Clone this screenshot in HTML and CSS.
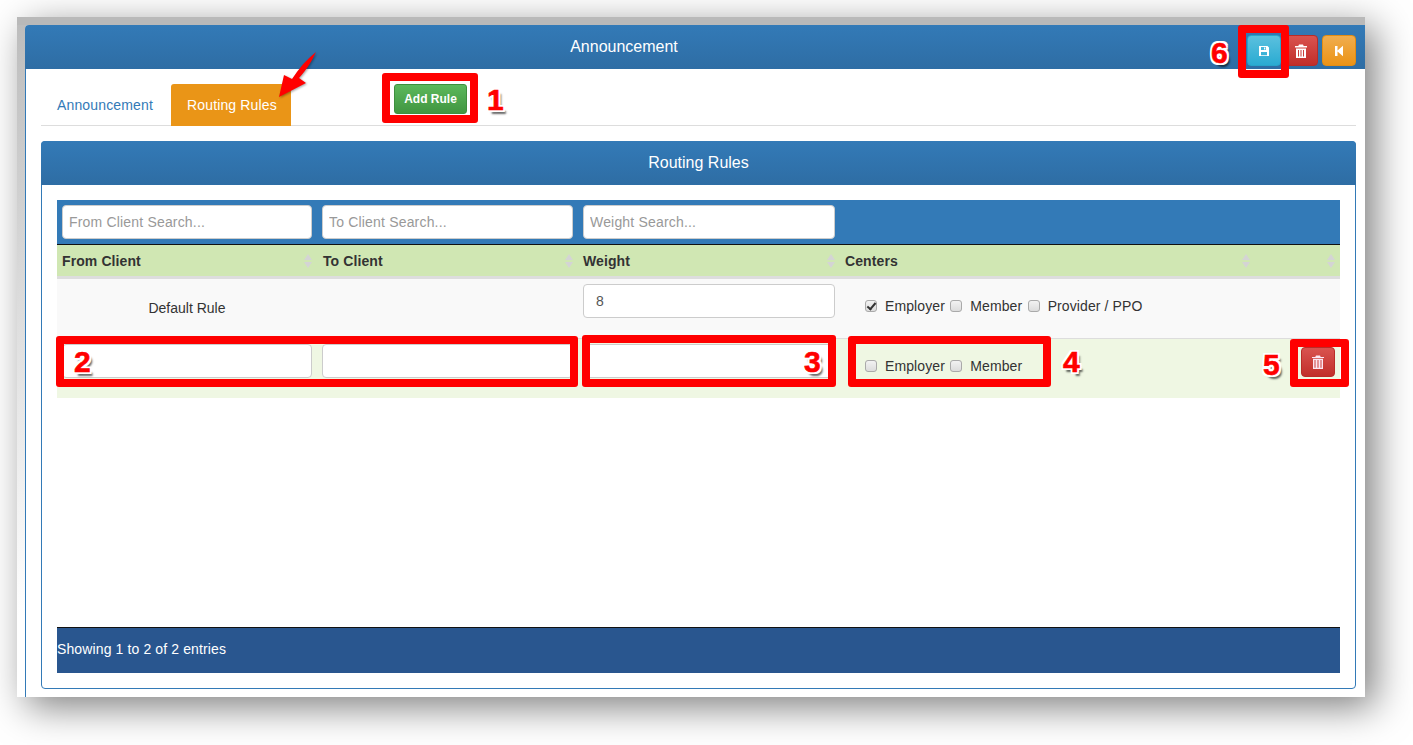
FILE: index.html
```html
<!DOCTYPE html>
<html lang="en">
<head>
    <meta charset="UTF-8">
    <title>Announcement</title>
    <link rel="stylesheet" href="styles.css">
</head>
<body>
    <div class="shot">
        <div class="panel">
            <div class="panel-head">
                <div class="panel-title">Announcement</div>
                <div class="toolbar">
                    <button class="btn btn-save">
                        <svg width="12" height="12" viewBox="0 0 12 12"><path fill="#fff" fill-rule="evenodd" d="M1 1h8.500L11 2.500V11H1zM3 2v3h5V2zM6 2.500h1.300v2H6zM3 7v3.200h6V7z"/></svg>
                    </button>
                    <button class="btn btn-del">
                        <svg width="12" height="14" viewBox="0 0 12 14"><path fill="#fff" fill-rule="evenodd" d="M4 0.500h4L8.700 2H12v1.500H0V2h3.300zM1 4.500h10V14H1zM3 6v6.500h1V6zM5.500 6v6.500h1V6zM8 6v6.500h1V6z"/></svg>
                    </button>
                    <button class="btn btn-back">
                        <svg width="10" height="12" viewBox="0 0 10 12"><path fill="#fff" d="M1 1h2.500v4.500L9 .8v10.400L3.500 6.500V11H1z"/></svg>
                    </button>
                </div>
            </div>
            <div class="panel-body">
                <div class="tabs">
                    <a class="tab">Announcement</a>
                    <a class="tab tab-active">Routing Rules</a>
                    <button class="btn-add">Add Rule</button>
                </div>
                <div class="inner-panel">
                    <div class="inner-head">Routing Rules</div>
                    <div class="inner-body">
                        <table class="rules">
                            <colgroup>
                                <col class="col-from">
                                <col class="col-to">
                                <col class="col-weight">
                                <col class="col-centers">
                                <col class="col-action">
                            </colgroup>
                            <thead>
                                <tr class="search-row">
                                    <td><input class="field" type="text" placeholder="From Client Search..."></td>
                                    <td><input class="field" type="text" placeholder="To Client Search..."></td>
                                    <td><input class="field" type="text" placeholder="Weight Search..."></td>
                                    <td></td>
                                    <td></td>
                                </tr>
                                <tr class="head-row">
                                    <th><div class="th-in">From Client <svg class="sort" width="8" height="14" viewBox="0 0 8 14"><path d="M4 0l4 6H0zM4 14L0 8h8z"/></svg></div></th>
                                    <th class="th-to"><div class="th-in">To Client <svg class="sort" width="8" height="14" viewBox="0 0 8 14"><path d="M4 0l4 6H0zM4 14L0 8h8z"/></svg></div></th>
                                    <th><div class="th-in">Weight <svg class="sort" width="8" height="14" viewBox="0 0 8 14"><path d="M4 0l4 6H0zM4 14L0 8h8z"/></svg></div></th>
                                    <th><div class="th-in">Centers <svg class="sort" width="8" height="14" viewBox="0 0 8 14"><path d="M4 0l4 6H0zM4 14L0 8h8z"/></svg></div></th>
                                    <th><div class="th-in th-end"><svg class="sort" width="8" height="14" viewBox="0 0 8 14"><path d="M4 0l4 6H0zM4 14L0 8h8z"/></svg></div></th>
                                </tr>
                            </thead>
                            <tbody>
                                <tr class="row-odd">
                                    <td class="default-rule">Default Rule</td>
                                    <td></td>
                                    <td class="cell-top"><input class="field field-weight" type="text" value="8"></td>
                                    <td class="centers">
                                        <label class="check"><input type="checkbox" checked> Employer</label>
                                        <label class="check"><input type="checkbox"> Member</label>
                                        <label class="check"><input type="checkbox"> Provider / PPO</label>
                                    </td>
                                    <td></td>
                                </tr>
                                <tr class="row-even">
                                    <td class="cell-top"><input class="field" type="text"></td>
                                    <td class="cell-top"><input class="field" type="text"></td>
                                    <td class="cell-top"><input class="field" type="text"></td>
                                    <td class="centers">
                                        <label class="check"><input type="checkbox"> Employer</label>
                                        <label class="check"><input type="checkbox"> Member</label>
                                    </td>
                                    <td class="cell-action">
                                        <button class="btn btn-del btn-row">
                                            <svg width="12" height="14" viewBox="0 0 12 14"><path fill="#fbe6f2" fill-rule="evenodd" d="M4 0.500h4L8.700 2H12v1H0V2h3.300zM1 3.800h10V14H1zM2.500 5v7.800h1V5zM5.500 5v7.800h1V5zM8.500 5v7.800h1V5z"/></svg>
                                        </button>
                                    </td>
                                </tr>
                            </tbody>
                        </table>
                        <div class="table-foot">Showing 1 to 2 of 2 entries</div>
                    </div>
                </div>
            </div>
        </div>
    </div>

    <!-- callouts drawn over the page -->
    <div class="box box-1"></div>
    <div class="box box-2"></div>
    <div class="box box-3"></div>
    <div class="box box-4"></div>
    <div class="box box-5"></div>
    <div class="box box-6"></div>
    <span class="num num-1">1</span>
    <span class="num num-2">2</span>
    <span class="num num-3">3</span>
    <span class="num num-4">4</span>
    <span class="num num-5">5</span>
    <span class="num num-6">6</span>
    <svg class="arrow" width="44" height="50" viewBox="0 0 44 50">
        <path fill="#f00" d="M41 1C37 10 32 18 24 27L31 32L4 46L9 24L17 28C24 17 32 8 41 1z"/>
    </svg>
</body>
</html>
```

FILE: styles.css
```css
html, body {
    margin: 0;
    padding: 0;
    height: 745px;
    overflow: hidden;
    background: #fff;
}

body {
    position: relative;
    font-family: "Liberation Sans", Arial, sans-serif;
    font-size: 14px;
    color: #333;
}

.shot {
    box-sizing: border-box;
    width: 1348px;
    height: 680px;
    margin: 17px 0 0 17px;
    padding-left: 8px;
    border-top: 8px solid #b9b9b9;
    background: linear-gradient(to bottom, #bdbdbd, #fff 88%);
    box-shadow: 10px 10px 36px rgba(0, 0, 0, .5);
}

.panel {
    display: flex;
    flex-direction: column;
    height: 672px;
    background: #fff;
    border-radius: 4px 0 0 0;
}

.panel-head {
    display: flex;
    height: 44px;
    color: #fff;
    background: linear-gradient(to bottom, #337ab7, #2e6da4);
    border-radius: 4px 0 0 0;
}

.panel-title {
    flex: 1;
    text-align: center;
    font-size: 16px;
    line-height: 43px;
}

.toolbar {
    display: flex;
    gap: 4px;
    box-sizing: border-box;
    width: 142px;
    padding: 10px 9px 0 24px;
}

.btn {
    display: flex;
    align-items: center;
    justify-content: center;
    width: 33.500px;
    height: 31px;
    padding: 0;
    border: 1px solid transparent;
    border-radius: 4px;
}

.btn-save {
    background: linear-gradient(to bottom, #5bc0de, #2aabd2);
    border-color: #28a4c9;
}

.btn-del {
    background: linear-gradient(to bottom, #d9534f, #c12e2a);
    border-color: #b92c28;
}

.btn-back {
    background: linear-gradient(to bottom, #f0ad4e, #eb9316);
    border-color: #e38d13;
}

.btn-row {
    display: inline-flex;
    width: 34px;
    height: 30px;
}

.panel-body {
    flex: 1;
    display: flex;
    flex-direction: column;
    padding: 15px 9px 8px 15px;
    border-left: 1px solid #337ab7;
}

.tabs {
    display: flex;
    align-items: flex-start;
    height: 41px;
    border-bottom: 1px solid #ddd;
}

.tab {
    box-sizing: border-box;
    width: 128px;
    height: 42px;
    padding-left: 16px;
    line-height: 42px;
    letter-spacing: .15px;
    color: #337ab7;
}

.tab-active {
    width: 120px;
    margin-left: 2px;
    color: #fff;
    background: #ea9517;
    border-radius: 3px 3px 0 0;
}

.btn-add {
    width: 73px;
    height: 30px;
    margin-left: 103px;
    padding: 0;
    font-family: inherit;
    font-size: 12px;
    font-weight: bold;
    color: #fff;
    background: linear-gradient(to bottom, #5cb85c, #419641);
    border: 1px solid #3e8f3e;
    border-radius: 3px;
}

.inner-panel {
    flex: 1;
    display: flex;
    flex-direction: column;
    margin-top: 15px;
    border: 1px solid #337ab7;
    border-radius: 4px;
}

.inner-head {
    height: 43px;
    margin: -1px -1px 0;
    padding-top: 1px;
    text-align: center;
    font-size: 16px;
    line-height: 42px;
    color: #fff;
    background: linear-gradient(to bottom, #337ab7, #2e6da4);
    border-radius: 4px 4px 0 0;
}

.inner-body {
    flex: 1;
    display: flex;
    flex-direction: column;
    padding: 15px;
}

.rules {
    width: 1283px;
    table-layout: fixed;
    border-collapse: collapse;
}

.col-from { width: 260px; }
.col-to { width: 261px; }
.col-weight { width: 262px; }
.col-centers { width: 415px; }
.col-action { width: 85px; }

.rules td, .rules th {
    padding: 0 5px;
}

.field {
    display: block;
    box-sizing: border-box;
    width: 100%;
    height: 34px;
    padding: 0 6px;
    font-family: inherit;
    font-size: 14px;
    color: #555;
    background: #fff;
    border: 1px solid #ccc;
    border-radius: 4px;
}

.field::placeholder {
    color: #999;
    letter-spacing: .18px;
}

.field-weight {
    padding-left: 12px;
}

.search-row {
    height: 44px;
    background: #337ab7;
    border-bottom: 1px solid #111;
}

.head-row {
    height: 33px;
    background: #d0e7b3;
    border-bottom: 3px solid #ddd;
}

.rules th {
    padding-top: 2px;
}

.th-in {
    display: flex;
    align-items: center;
    justify-content: space-between;
    padding-right: 0;
    font-size: 14px;
    font-weight: bold;
    letter-spacing: .1px;
}

.rules .th-to {
    padding-left: 6px;
}

.th-end {
    justify-content: flex-end;
}

.sort {
    fill: #d4d4d4;
}

.row-odd {
    height: 61px;
    background: #f9f9f9;
}

.row-even {
    height: 60px;
    background: #eff7e3;
    border-top: 1px solid #ddd;
}

.default-rule {
    text-align: center;
}

.rules .cell-top {
    padding-top: 5px;
    vertical-align: top;
}

.rules .centers {
    padding: 0 0 4px 25px;
}

.check {
    display: inline-flex;
    align-items: center;
    margin-right: 1.500px;
    letter-spacing: .1px;
    color: #333;
}

.check input {
    appearance: none;
    position: relative;
    box-sizing: border-box;
    width: 12px;
    height: 12px;
    margin: 0 8px 0 0;
    background: linear-gradient(to bottom, #f2f2f2, #dcdcdc);
    border: 1px solid #aaa;
    border-radius: 3px;
}

/* tick of the checked box */
.check input:checked::after {
    content: "";
    position: absolute;
    left: 3px;
    top: 0;
    width: 3px;
    height: 7px;
    border: solid #333;
    border-width: 0 2px 2px 0;
    transform: rotate(40deg);
}

.rules .cell-action {
    text-align: right;
    vertical-align: top;
    padding-top: 8px;
}

.table-foot {
    height: 45px;
    margin-top: auto;
    line-height: 43px;
    letter-spacing: .12px;
    color: #fff;
    background: #29568f;
    border-top: 1px solid #111;
}

/* callouts */
.box {
    position: absolute;
    box-sizing: border-box;
    border: 8px solid #f00;
    border-radius: 3px;
}

.box-1 { left: 382px; top: 73px; width: 96px; height: 50px; }
.box-2 { left: 56px; top: 336px; width: 522px; height: 51px; }
.box-3 { left: 582px; top: 335px; width: 254px; height: 52px; }
.box-4 { left: 848px; top: 336px; width: 203px; height: 51px; }
.box-5 { left: 1290px; top: 339px; width: 59px; height: 48px; }
.box-6 { left: 1238px; top: 25px; width: 51px; height: 53px; }

.num {
    position: absolute;
    font-size: 30px;
    font-weight: bold;
    line-height: 30px;
    color: #f00;
    -webkit-text-stroke: .6px #f00;
    text-shadow: -2px -2px 0 #fff, 2px -2px 0 #fff, -2px 2px 0 #fff, 2px 2px 0 #fff, 0 -2px 0 #fff, 0 2px 0 #fff, -2px 0 0 #fff, 2px 0 0 #fff, 3px 4px 2px rgba(0, 0, 0, .6);
}

.num-1 { left: 487px; top: 85px; }
.num-2 { left: 74px; top: 347px; }
.num-3 { left: 804px; top: 347px; }
.num-4 { left: 1063px; top: 347px; }
.num-5 { left: 1263px; top: 350px; }
.num-6 { left: 1211px; top: 38px; }

.arrow {
    position: absolute;
    left: 275px;
    top: 51px;
    filter: drop-shadow(1px 1px 1px rgba(0, 0, 0, .35));
}
```
